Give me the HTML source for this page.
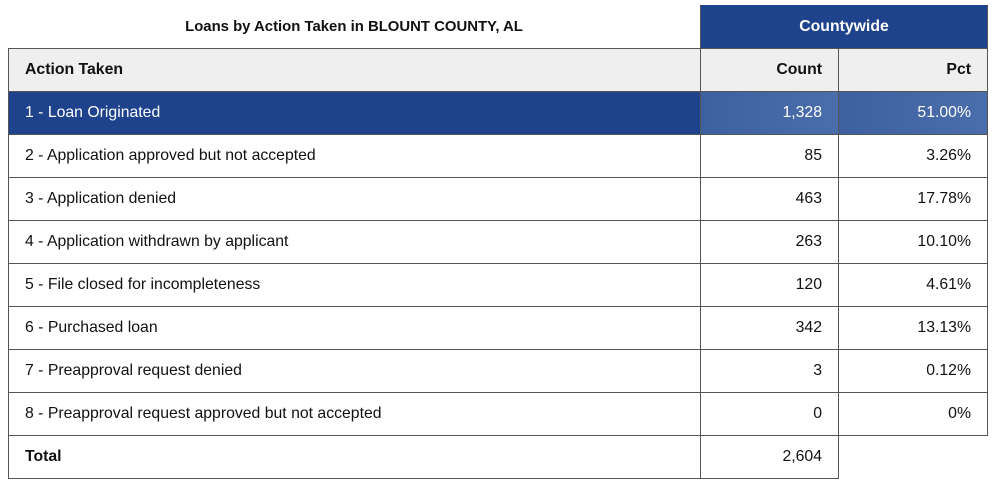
<!DOCTYPE html><html><head><style>
body{margin:0;width:994px;height:488px;background:#fff;font-family:"Liberation Sans",sans-serif;font-size:15.8px;color:#111;position:relative;overflow:hidden}
.c{position:absolute;box-sizing:border-box;border:1px solid #555;display:flex;align-items:center;padding:0 16px;white-space:nowrap}
.r{justify-content:flex-end}
.b{font-weight:bold}
</style></head><body>
<div style="position:absolute;left:8px;top:5px;width:692px;height:43px;display:flex;align-items:center;justify-content:center;font-weight:bold;font-size:14.9px">Loans by Action Taken in BLOUNT COUNTY, AL</div>
<div class="c b" style="left:700px;top:5px;width:288px;height:44px;background:#1f428c;color:#fff;justify-content:center;border-color:#1f428c #555 #555 #555">Countywide</div>
<div class="c b" style="left:8px;top:48px;width:693px;height:44px;background:#efefef">Action Taken</div>
<div class="c b r" style="left:700px;top:48px;width:139px;height:44px;background:#efefef">Count</div>
<div class="c b r" style="left:838px;top:48px;width:150px;height:44px;background:#efefef">Pct</div>
<div class="c" style="left:8px;top:91px;width:693px;height:44px;background:#1f428c;color:#fff">1 - Loan Originated</div>
<div class="c r" style="left:700px;top:91px;width:139px;height:44px;background:linear-gradient(90deg,#3d60a0,#4a6dab);color:#fff">1,328</div>
<div class="c r" style="left:838px;top:91px;width:150px;height:44px;background:linear-gradient(90deg,#3d60a0,#4a6dab);color:#fff">51.00%</div>
<div class="c" style="left:8px;top:134px;width:693px;height:44px">2 - Application approved but not accepted</div>
<div class="c r" style="left:700px;top:134px;width:139px;height:44px">85</div>
<div class="c r" style="left:838px;top:134px;width:150px;height:44px">3.26%</div>
<div class="c" style="left:8px;top:177px;width:693px;height:44px">3 - Application denied</div>
<div class="c r" style="left:700px;top:177px;width:139px;height:44px">463</div>
<div class="c r" style="left:838px;top:177px;width:150px;height:44px">17.78%</div>
<div class="c" style="left:8px;top:220px;width:693px;height:44px">4 - Application withdrawn by applicant</div>
<div class="c r" style="left:700px;top:220px;width:139px;height:44px">263</div>
<div class="c r" style="left:838px;top:220px;width:150px;height:44px">10.10%</div>
<div class="c" style="left:8px;top:263px;width:693px;height:44px">5 - File closed for incompleteness</div>
<div class="c r" style="left:700px;top:263px;width:139px;height:44px">120</div>
<div class="c r" style="left:838px;top:263px;width:150px;height:44px">4.61%</div>
<div class="c" style="left:8px;top:306px;width:693px;height:44px">6 - Purchased loan</div>
<div class="c r" style="left:700px;top:306px;width:139px;height:44px">342</div>
<div class="c r" style="left:838px;top:306px;width:150px;height:44px">13.13%</div>
<div class="c" style="left:8px;top:349px;width:693px;height:44px">7 - Preapproval request denied</div>
<div class="c r" style="left:700px;top:349px;width:139px;height:44px">3</div>
<div class="c r" style="left:838px;top:349px;width:150px;height:44px">0.12%</div>
<div class="c" style="left:8px;top:392px;width:693px;height:44px">8 - Preapproval request approved but not accepted</div>
<div class="c r" style="left:700px;top:392px;width:139px;height:44px">0</div>
<div class="c r" style="left:838px;top:392px;width:150px;height:44px">0%</div>
<div class="c b" style="left:8px;top:435px;width:693px;height:44px">Total</div>
<div class="c r" style="left:700px;top:435px;width:139px;height:44px">2,604</div>
</body></html>
